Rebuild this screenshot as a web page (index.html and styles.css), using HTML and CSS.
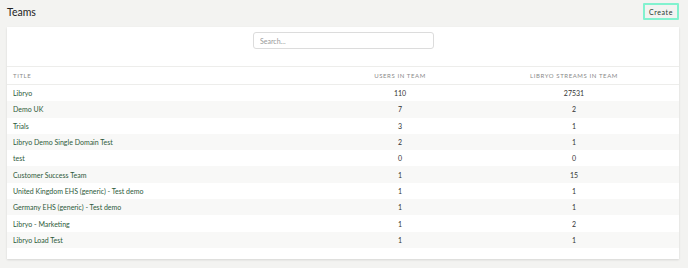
FILE: index.html
```html
<!DOCTYPE html>
<html lang="en">
<head>
  <meta charset="UTF-8">
  <meta name="viewport" content="width=device-width, initial-scale=1.0">
  <title>Teams</title>
  <link rel="stylesheet" href="styles.css">
</head>
<body>
  <div class="page">
    <div class="top-bar">
      <h1>Teams</h1>
      <button class="btn-create">Create</button>
    </div>

    <div class="card">
      <div class="search-wrap">
        <input type="text" class="search" placeholder="Search...">
      </div>

      <table class="teams">
        <thead>
          <tr>
            <th class="col-title">Title</th>
            <th class="col-users">Users in team</th>
            <th class="col-streams">Libryo streams in team</th>
          </tr>
        </thead>
        <tbody>
          <tr><td><a href="#">Libryo</a></td><td>110</td><td>27531</td></tr>
          <tr><td><a href="#">Demo UK</a></td><td>7</td><td>2</td></tr>
          <tr><td><a href="#">Trials</a></td><td>3</td><td>1</td></tr>
          <tr><td><a href="#">Libryo Demo Single Domain Test</a></td><td>2</td><td>1</td></tr>
          <tr><td><a href="#">test</a></td><td>0</td><td>0</td></tr>
          <tr><td><a href="#">Customer Success Team</a></td><td>1</td><td>15</td></tr>
          <tr><td><a href="#">United Kingdom EHS (generic) - Test demo</a></td><td>1</td><td>1</td></tr>
          <tr><td><a href="#">Germany EHS (generic) - Test demo</a></td><td>1</td><td>1</td></tr>
          <tr><td><a href="#">Libryo - Marketing</a></td><td>1</td><td>2</td></tr>
          <tr><td><a href="#">Libryo Load Test</a></td><td>1</td><td>1</td></tr>
        </tbody>
      </table>
    </div>
  </div>
</body>
</html>
```

FILE: styles.css
```css
html, body {
  margin: 0;
  padding: 0;
}
body {
  font-family: Lato, "Open Sans", sans-serif;
  background: #f3f3f1;
  color: #333;
}
.page {
  padding: 3px 9px 9px 7px;
}
.top-bar {
  display: flex;
  justify-content: space-between;
  align-items: center;
  height: 17px;
  margin-bottom: 7px;
}
h1 {
  margin: 0;
  font-size: 10.5px;
  font-weight: 400;
  color: #222;
}
.btn-create {
  font-family: inherit;
  font-size: 7px;
  font-weight: 400;
  letter-spacing: 0.6px;
  color: #1f3a30;
  background: #f3f3f1;
  border: 2px solid #82f2cf;
  border-radius: 1px;
  height: 17px;
  width: 36px;
  padding: 0;
}
.card {
  background: #fff;
  padding-bottom: 11px;
  box-shadow: 0 1px 2px rgba(0, 0, 0, 0.12);
}
.search-wrap {
  display: flex;
  justify-content: center;
  padding: 5px 0 17px;
}
.search {
  width: 181px;
  height: 17px;
  box-sizing: border-box;
  border: 1px solid #dcdcdc;
  border-radius: 3px;
  font-family: inherit;
  font-size: 7px;
  padding: 0 6px;
  color: #333;
  margin-left: 1px;
}
.search::placeholder {
  color: #999;
}
.teams {
  width: 100%;
  border-collapse: collapse;
  table-layout: fixed;
}
.teams th {
  font-size: 6px;
  font-weight: 400;
  letter-spacing: 0.6px;
  text-transform: uppercase;
  color: #8a8a8a;
  height: 17px;
  padding: 0;
  border-top: 1px solid #ededeb;
  border-bottom: 1px solid #ededeb;
  text-align: center;
}
.teams th.col-title {
  text-align: left;
  width: 318px;
  padding-left: 6px;
}
.teams th.col-users {
  width: 138px;
}
.teams td {
  font-size: 7px;
  height: 16.3px;
  padding: 0;
  text-align: center;
  color: #333;
}
.teams td:first-child {
  text-align: left;
  padding-left: 6px;
}
.teams td a {
  color: #2d5a3a;
  text-decoration: none;
}
.teams tbody tr:nth-child(even) {
  background: #f8f8f7;
}
```
